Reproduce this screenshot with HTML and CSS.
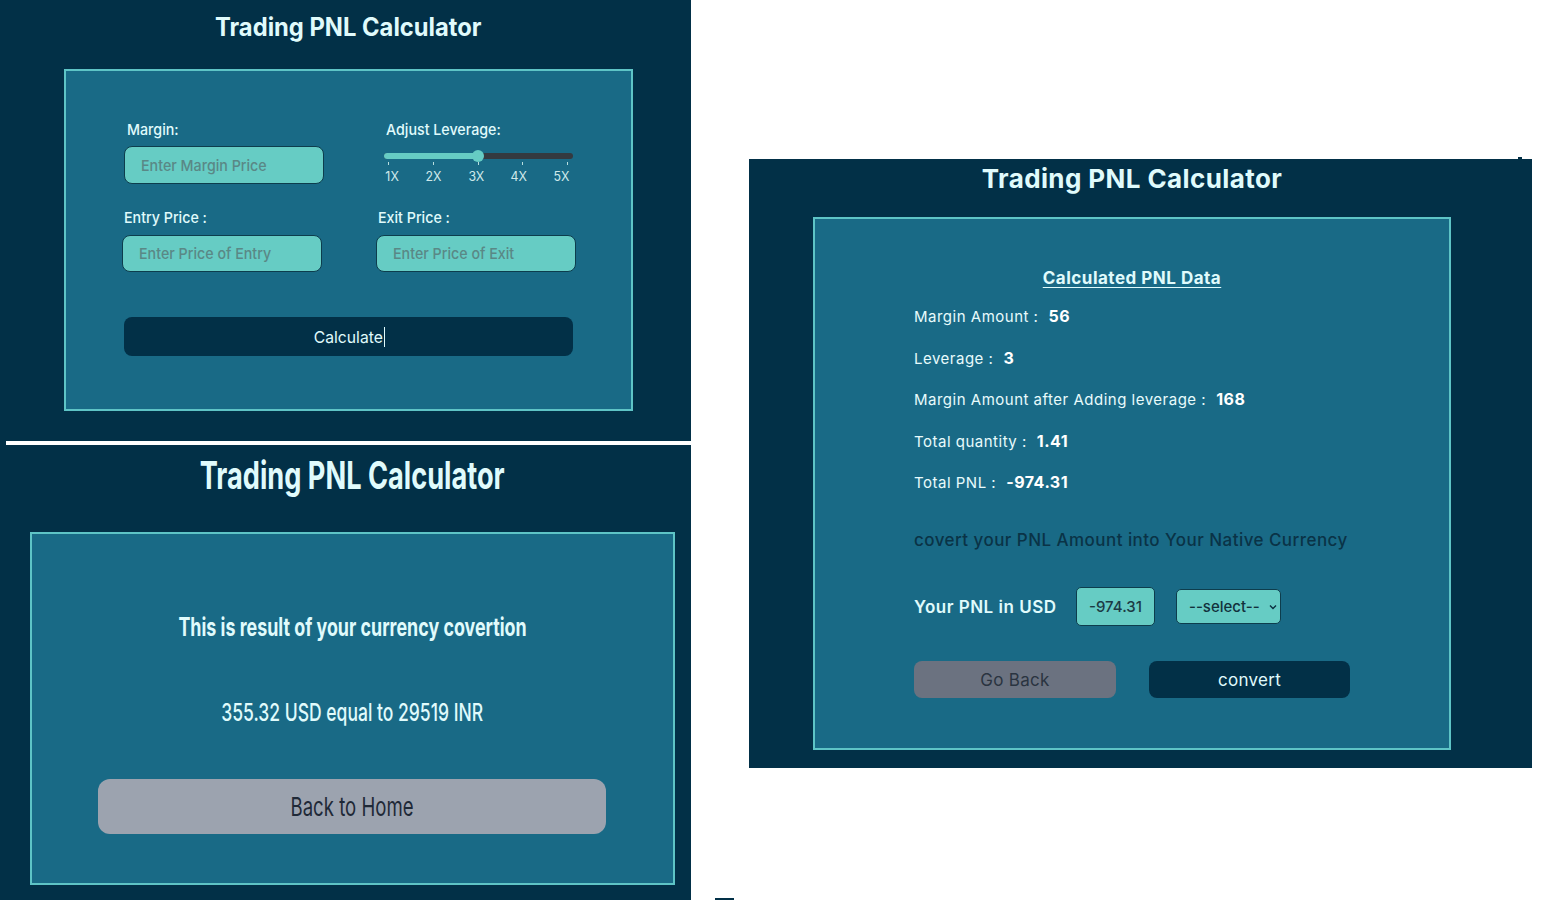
FILE: index.html
```html
<!DOCTYPE html>
<html lang="en">
<head>
<meta charset="utf-8">
<title>Trading PNL Calculator</title>
<link rel="stylesheet" href="styles.css">
</head>
<body>
<div class="page">
  <div class="left">
    <section class="panel p1">
      <h1 class="title"><span class="sq">Trading PNL Calculator</span></h1>
      <div class="box box1">
        <div class="form-grid">
          <div class="field f-margin">
            <label class="lbl"><span class="sq">Margin:</span></label>
            <div class="input"><span class="sq ph">Enter Margin Price</span></div>
          </div>
          <div class="field f-lev">
            <label class="lbl"><span class="sq">Adjust Leverage:</span></label>
            <div class="slider">
              <div class="track"><div class="fill"></div><div class="thumb"></div></div>
              <div class="ticks"><i></i><i></i><i></i><i></i><i></i></div>
              <div class="marks"><span class="sq">1X</span><span class="sq">2X</span><span class="sq">3X</span><span class="sq">4X</span><span class="sq">5X</span></div>
            </div>
          </div>
          <div class="field f-entry">
            <label class="lbl"><span class="sq">Entry Price :</span></label>
            <div class="input"><span class="sq ph">Enter Price of Entry</span></div>
          </div>
          <div class="field f-exit">
            <label class="lbl"><span class="sq">Exit Price :</span></label>
            <div class="input"><span class="sq ph">Enter Price of Exit</span></div>
          </div>
        </div>
        <div class="calc-btn"><span class="sq">Calculate</span><i class="caret"></i></div>
      </div>
    </section>
    <div class="divider"></div>
    <section class="panel p2">
      <h1 class="title"><span class="sq">Trading PNL Calculator</span></h1>
      <div class="box box2">
        <p class="res-head"><span class="sq">This is result of your currency covertion</span></p>
        <p class="res-val"><span class="sq">355.32 USD equal to 29519 INR</span></p>
        <div class="home-btn"><span class="sq">Back to Home</span></div>
      </div>
    </section>
  </div>

  <section class="panel p3">
    <h1 class="title">Trading PNL Calculator</h1>
    <div class="box box3">
      <h2 class="data-head">Calculated PNL Data</h2>
      <div class="rows">
        <div class="row"><span class="k">Margin Amount :</span><span class="v">56</span></div>
        <div class="row"><span class="k">Leverage :</span><span class="v">3</span></div>
        <div class="row"><span class="k">Margin Amount after Adding leverage :</span><span class="v">168</span></div>
        <div class="row"><span class="k">Total quantity :</span><span class="v">1.41</span></div>
        <div class="row"><span class="k">Total PNL :</span><span class="v">-974.31</span></div>
      </div>
      <p class="covert">covert your PNL Amount into Your Native Currency</p>
      <div class="conv-row">
        <span class="usd">Your PNL in USD</span>
        <div class="amt">-974.31</div>
        <div class="sel">--select--
          <svg class="chev" width="8" height="6" viewBox="0 0 8 6"><path d="M1 1.5 L4 4.5 L7 1.5" fill="none" stroke="#0b2f3f" stroke-width="1.4"/></svg>
        </div>
      </div>
      <div class="btn-row">
        <div class="btn back">Go Back</div>
        <div class="btn conv">convert</div>
      </div>
    </div>
  </section>
  <span class="mark m1"></span>
  <span class="mark m2"></span>
</div>
</body>
</html>
```

FILE: styles.css
```css
body {
  margin: 0;
  background: #ffffff;
  font-family: "Inter", "Noto Sans", sans-serif;
}
.page {
  position: relative;
  display: flex;
  align-items: flex-start;
  width: 1547px;
  height: 900px;
  overflow: hidden;
}
.left {
  width: 691px;
  flex: none;
  display: flex;
  flex-direction: column;
  background: #023047;
}
.panel {
  background: #023047;
  color: #e0fbfc;
  box-sizing: border-box;
}
.title {
  margin: 0;
  font-weight: 700;
  text-align: center;
  white-space: nowrap;
}
.sq {
  display: inline-block;
  white-space: nowrap;
  transform: scaleX(var(--sx, 1));
  transform-origin: left center;
}
.title .sq, .res-head .sq, .res-val .sq, .home-btn .sq, .calc-btn .sq, .marks .sq {
  transform-origin: center center;
}
.box {
  box-sizing: border-box;
  background: #196a86;
  border: 2px solid #5ec4c6;
}

/* ---------- panel 1 ---------- */
.p1 {
  --sx: 0.95;
  height: 441px;
  padding-top: 12px;
}
.p1 .title {
  font-size: 25px;
  line-height: 30px;
  padding-left: 6px;
}
.box1 {
  margin: 27px 0 0 64px;
  width: 569px;
  height: 342px;
  padding: 50px 0 0 56px;
}
.form-grid {
  display: grid;
  grid-template-columns: 200px 200px;
  column-gap: 54px;
  row-gap: 25px;
}
.field {
  display: flex;
  flex-direction: column;
}
.lbl {
  font-size: 15px;
  line-height: 18px;
  font-weight: 500;
  color: #e0fbfc;
}
.input {
  box-sizing: border-box;
  width: 200px;
  background: #66ccc4;
  border: 1.5px solid #0d3d4d;
  border-radius: 8px;
  display: flex;
  align-items: center;
  padding-left: 16px;
}
.ph {
  font-size: 15px;
  font-weight: 500;
  color: #5a8886;
}
.f-margin .lbl { margin-left: 5px; }
.f-margin .input { margin: 7px 0 0 2px; height: 38px; }
.f-lev .lbl { margin-left: 10px; }
.f-entry .lbl { margin-left: 2px; }
.f-entry .input, .f-exit .input { margin-top: 8px; height: 37px; }
.f-exit .lbl { margin-left: 2px; }

.slider {
  margin: 14px 0 0 8px;
  width: 189px;
}
.track {
  position: relative;
  height: 6px;
  border-radius: 3px;
  background: #343a40;
}
.fill {
  width: 94px;
  height: 6px;
  border-radius: 3px;
  background: #66ccc4;
}
.thumb {
  position: absolute;
  left: 88px;
  top: -3px;
  width: 12px;
  height: 12px;
  border-radius: 50%;
  background: #66ccc4;
}
.ticks {
  display: flex;
  justify-content: space-between;
  padding: 0 5px 0 4px;
  margin-top: 3px;
}
.ticks i {
  width: 1px;
  height: 3px;
  background: #b8dede;
}
.marks {
  display: flex;
  justify-content: space-between;
  padding: 0 3px 0 1px;
  margin-top: 4px;
  font-size: 13px;
  line-height: 14px;
  color: #cfe9ea;
}
.calc-btn {
  margin: 45px 0 0 2px;
  width: 449px;
  height: 39px;
  border-radius: 8px;
  background: #023047;
  display: flex;
  align-items: center;
  justify-content: center;
  font-size: 16.5px;
  color: #e0fbfc;
}
.caret {
  width: 1px;
  height: 20px;
  background: #e0fbfc;
  margin-left: 0;
}

.divider {
  height: 4px;
  margin-left: 6px;
  background: #ffffff;
}

/* ---------- panel 2 ---------- */
.p2 {
  --sx: 0.715;
  height: 455px;
  padding-top: 8px;
}
.p2 .title {
  font-size: 38px;
  line-height: 44px;
  padding-left: 14px;
}
.box2 {
  margin: 35px 0 0 30px;
  width: 645px;
  height: 353px;
  padding-top: 78px;
  text-align: center;
}
.res-head {
  margin: 0;
  font-size: 25px;
  line-height: 30px;
  font-weight: 700;
  color: #e0fbfc;
}
.res-val {
  margin: 55px 0 0;
  font-size: 24.5px;
  line-height: 30px;
  font-weight: 500;
  color: #e0fbfc;
}
.home-btn {
  margin: 52px 0 0 66px;
  width: 508px;
  height: 55px;
  border-radius: 12px;
  background: #9ca3af;
  display: flex;
  align-items: center;
  justify-content: center;
  font-size: 26px;
  color: #1f2937;
}

/* ---------- panel 3 ---------- */
.p3 {
  margin: 159px 0 0 58px;
  width: 783px;
  height: 609px;
  padding-top: 5px;
}
.p3 .title {
  font-size: 26px;
  line-height: 30px;
  letter-spacing: 0.4px;
  padding-right: 17px;
}
.box3 {
  margin: 23px 0 0 64px;
  width: 638px;
  height: 533px;
  padding: 49px 0 0 99px;
}
.data-head {
  margin: 0 0 0 -99px;
  text-align: center;
  font-size: 17px;
  line-height: 20px;
  font-weight: 700;
  letter-spacing: 0.5px;
  text-decoration: underline;
  text-underline-offset: 3px;
  color: #e0fbfc;
}
.rows {
  margin-top: 18px;
  display: flex;
  flex-direction: column;
  gap: 21.5px;
}
.row {
  display: flex;
  align-items: baseline;
  gap: 10px;
  height: 20px;
  line-height: 20px;
  letter-spacing: 0.5px;
}
.k {
  font-size: 15px;
  color: #e8fbfc;
}
.v {
  font-size: 16px;
  font-weight: 700;
  color: #ffffff;
}
.covert {
  margin: 38px 0 0;
  font-size: 17px;
  line-height: 20px;
  font-weight: 500;
  letter-spacing: 0.45px;
  color: #0a3346;
}
.conv-row {
  margin-top: 37px;
  display: flex;
  align-items: center;
  height: 39px;
}
.usd {
  font-size: 17px;
  font-weight: 600;
  letter-spacing: 0.5px;
  color: #e0fbfc;
  width: 162px;
}
.amt {
  box-sizing: border-box;
  width: 79px;
  height: 39px;
  border: 1.5px solid #0d3d4d;
  border-radius: 5px;
  background: #66ccc4;
  display: flex;
  align-items: center;
  justify-content: center;
  font-size: 15px;
  font-weight: 500;
  color: #1c3a44;
}
.sel {
  box-sizing: border-box;
  margin-left: 21px;
  width: 105px;
  height: 35px;
  border: 1.5px solid #0d3d4d;
  border-radius: 5px;
  background: #66ccc4;
  display: flex;
  align-items: center;
  padding-left: 12px;
  font-size: 15px;
  font-weight: 500;
  color: #12313c;
}
.chev {
  margin-left: 9px;
}
.btn-row {
  margin-top: 35px;
  display: flex;
  gap: 33px;
}
.btn {
  width: 202px;
  height: 37px;
  border-radius: 8px;
  display: flex;
  align-items: center;
  justify-content: center;
  font-size: 17px;
  letter-spacing: 0.3px;
}
.back {
  background: #6b7280;
  color: #2a3441;
}
.conv {
  width: 201px;
  background: #023047;
  color: #e0fbfc;
}

.mark {
  position: absolute;
  background: #023047;
}
.m1 { left: 1518px; top: 157px; width: 4px; height: 2px; }
.m2 { left: 715px; top: 898px; width: 19px; height: 2px; }
```
